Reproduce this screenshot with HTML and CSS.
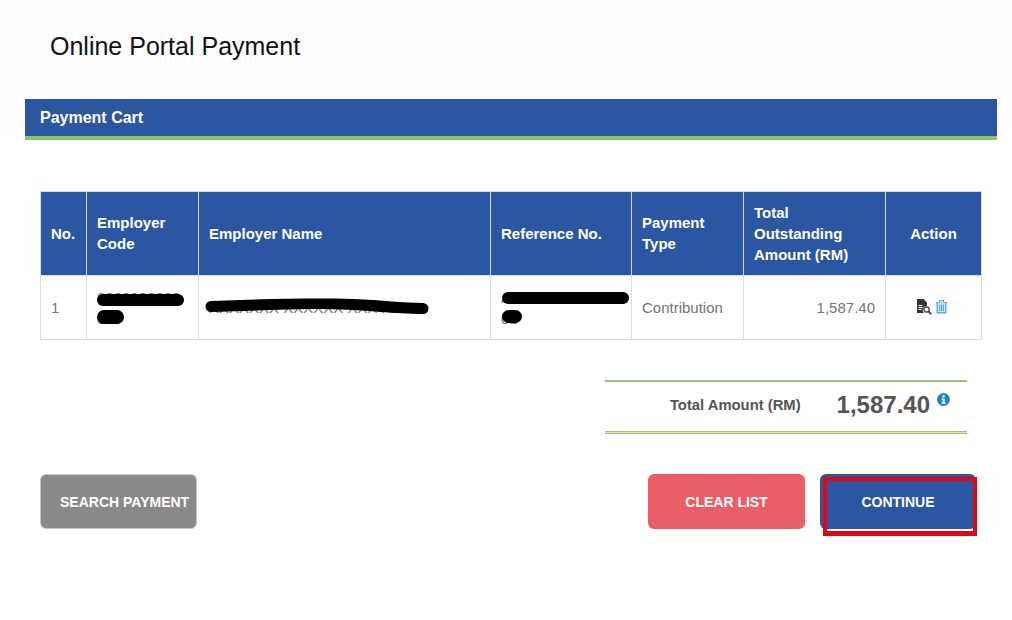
FILE: index.html
```html
<!DOCTYPE html>
<html lang="en">
<head>
    <meta charset="UTF-8">
    <meta name="viewport" content="width=device-width, initial-scale=1.0">
    <title>Online Portal Payment</title>
    <link rel="stylesheet" href="styles.css">
</head>
<body>
    <h1 class="page-title">Online Portal Payment</h1>

    <div class="panel-head">Payment Cart</div>

    <div class="panel-body">
        <table class="cart">
            <colgroup>
                <col class="col-no">
                <col class="col-code">
                <col class="col-name">
                <col class="col-ref">
                <col class="col-type">
                <col class="col-amount">
                <col class="col-action">
            </colgroup>
            <thead>
                <tr>
                    <th>No.</th>
                    <th class="two-line">Employer Code</th>
                    <th>Employer Name</th>
                    <th>Reference No.</th>
                    <th class="two-line">Payment Type</th>
                    <th>Total<br>Outstanding<br>Amount (RM)</th>
                    <th class="center">Action</th>
                </tr>
            </thead>
            <tbody>
                <tr>
                    <td>1</td>
                    <td class="masked">
                        0000000000 00
                        <span class="blob blob-code1"></span>
                        <span class="blob blob-code2"></span>
                    </td>
                    <td class="masked">
                        XXXXXXX XXXXXX XXX XXX
                        <svg class="blob-name" width="227" height="16" viewBox="0 0 227 16">
                            <path d="M8 3C60 1 110 0 150 1C180 2 200 5 220 5A5.500 5.500 0 0 1 220 16C190 16 170 12 120 11C80 11 40 13 8 14A5.500 5.500 0 0 1 8 3z"/>
                        </svg>
                    </td>
                    <td class="masked">
                        A0000000000000 01
                        <span class="blob blob-ref1"></span>
                        <span class="blob blob-ref2"></span>
                    </td>
                    <td>Contribution</td>
                    <td class="right">1,587.40</td>
                    <td class="center">
                        <span class="actions">
                            <!-- view -->
                            <svg width="16" height="16" viewBox="0 0 16 16">
                                <path d="M1 0h6.500l3.500 3.500V7a4 4 0 0 0-3 7H1z" fill="#333"/>
                                <path d="M2.500 6.500h4M2.500 8.500h4M2.500 10.500h3" stroke="#fff" stroke-width="1"/>
                                <circle cx="10.500" cy="10.500" r="2.700" fill="#fff" stroke="#333" stroke-width="1.200"/>
                                <path d="M12.500 12.500l2.800 2.800" stroke="#222" stroke-width="1.500"/>
                            </svg>
                            <!-- delete -->
                            <svg width="13" height="15" viewBox="0 0 13 15">
                                <path d="M1 3.500h11M4.500 3.500V1.500h4v2" fill="none" stroke="#3f9fdc" stroke-width="1.200"/>
                                <path d="M2.200 3.500v10.300h8.600V3.500" fill="#d3eafa" stroke="#3f9fdc" stroke-width="1.200"/>
                                <path d="M4.700 5.500v6.500M6.500 5.500v6.500M8.300 5.500v6.500" stroke="#3f9fdc" stroke-width="1"/>
                            </svg>
                        </span>
                    </td>
                </tr>
            </tbody>
        </table>

        <div class="total-row">
            <div class="total-box">
                <span class="total-label">Total Amount (RM)</span>
                <span class="total-value">1,587.40</span>
                <svg class="info" width="13" height="13" viewBox="0 0 13 13">
                    <circle cx="6.500" cy="6.500" r="6.500" fill="#1b86c8"/>
                    <rect x="5.400" y="2.300" width="2.300" height="2.100" fill="#fff"/>
                    <path d="M4.500 5.400h3.200v4.100h1v1.300H4.500V9.500h1V6.700h-1z" fill="#fff"/>
                </svg>
            </div>
        </div>

        <div class="buttons">
            <button class="btn btn-search">SEARCH PAYMENT</button>
            <div class="buttons-right">
                <button class="btn btn-clear">CLEAR LIST</button>
                <div class="continue-wrap">
                    <button class="btn btn-continue">CONTINUE</button>
                    <span class="highlight"></span>
                </div>
            </div>
        </div>
    </div>
</body>
</html>
```

FILE: styles.css
```css
html { background: #fff; }
body { margin: 0; min-height: 620px; background: linear-gradient(#fcfcfe, #fff 140px); font-family: "Liberation Sans", Arial, sans-serif; color: #666; }

.page-title { margin: 0; padding: 32px 0 0 50px; height: 66px; font-size: 25px; font-weight: normal; line-height: 28px; color: #111; box-sizing: border-box; }

.panel-head { margin: 33px 15px 0 25px; height: 37px; padding-left: 15px; background: #2b56a2; border-bottom: 4px solid #8fc26e; font-size: 16px; font-weight: bold; line-height: 37px; color: #fff; }

.panel-body { padding: 51px 30px 0 40px; }

.cart { width: 941px; table-layout: fixed; border-collapse: collapse; font-size: 15px; }
.col-no { width: 46px; }
.col-code { width: 112px; }
.col-name { width: 292px; }
.col-ref { width: 141px; }
.col-type { width: 112px; }
.col-amount { width: 142px; }
.col-action { width: 96px; }

.cart th { height: 84px; padding: 0 10px; background: #2b56a2; border: 1px solid #d5d9e4; color: #fff; font-weight: bold; line-height: 21px; text-align: left; box-sizing: border-box; }
.cart th.two-line { padding-bottom: 2px; }
.cart td { height: 64px; padding: 0 10px; border: 1px solid #dcdcdf; line-height: 21px; color: #757575; box-sizing: border-box; }
.cart .center { text-align: center; }
.cart .right { text-align: right; }

.masked { position: relative; }
.blob { position: absolute; background: #000; border-radius: 8px; }
.blob-code1 { left: 10px; top: 18px; width: 87px; height: 12px; }
.blob-code2 { left: 10px; top: 34px; width: 27px; height: 14px; }
.blob-name { position: absolute; left: 4px; top: 22px; }
.blob-ref1 { left: 11px; top: 16px; width: 127px; height: 12px; }
.blob-ref2 { left: 11px; top: 34px; width: 20px; height: 13px; }

.actions { display: inline-flex; align-items: center; gap: 3px; margin: 3px 0 0 -3px; }

.total-row { display: flex; justify-content: flex-end; margin: 40px 15px 0 0; }
.total-box { display: flex; align-items: center; justify-content: flex-end; width: 362px; height: 52px; padding: 0 17px 3px 0; border-top: 2px solid #9cc274; border-bottom: 1px solid #9cc274; box-shadow: 0 1px 0 #dcebc8, 0 2px 0 #9cc274; box-sizing: border-box; }
.total-label { margin-right: 36px; font-size: 14.8px; font-weight: bold; color: #555; }
.total-value { font-size: 24px; font-weight: bold; color: #555; }
.info { margin: -12px 0 0 7px; }

.buttons { display: flex; justify-content: space-between; margin: 42px 6px 0 0; }
.buttons-right { display: flex; gap: 15px; }
.btn { width: 157px; height: 55px; padding: 0; border: 0; border-radius: 6px; font-family: inherit; font-size: 14px; font-weight: bold; color: #fff; }
.btn-search { padding-left: 19px; background: #8a8889; border: 1px solid #c8c8c8; text-align: left; }
.btn-clear { background: #ea5f66; }
.continue-wrap { position: relative; }
.btn-continue { display: block; width: 156px; background: #2b56a2; }

.highlight { position: absolute; left: 3px; top: 3px; width: 154px; height: 59px; border: solid #e2060f; border-width: 4px 4px 5px; box-sizing: border-box; }
```
